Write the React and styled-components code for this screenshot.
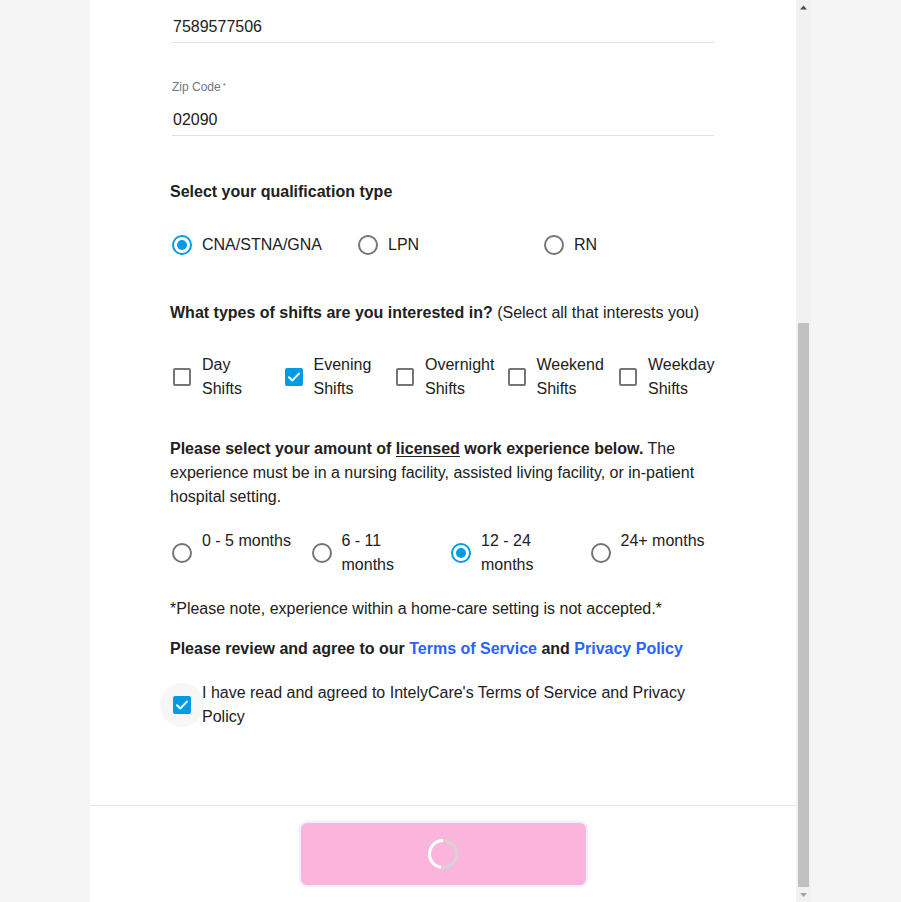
import React, { useLayoutEffect, useRef } from "react";
import styled, { createGlobalStyle } from "styled-components";

const Global = createGlobalStyle`
  html, body { margin: 0; padding: 0; background: #f5f5f5; }
  body { font-family: "Liberation Sans", Arial, sans-serif; color: #212121; }
  * { box-sizing: border-box; }
`;

const Panel = styled.div`
  width: 721px;
  height: 902px;
  margin: 0 auto;
  background: #fff;
  display: flex;
`;

const ScrollArea = styled.div`
  flex: 1;
  min-width: 0;
  height: 100%;
  overflow: hidden;
`;

const Scrollbar = styled.div`
  flex: none;
  width: 15px;
  height: 100%;
  background: #f1f1f1;
  display: flex;
  flex-direction: column;
`;

const ScrollButton = styled.div`
  flex: none;
  height: 15px;
  display: flex;
  align-items: center;
  justify-content: center;
`;

const ScrollTrack = styled.div`
  flex: 1;
  display: flex;
  flex-direction: column;
  justify-content: flex-end;
  padding: 0 2px;
`;

const ScrollThumb = styled.div`
  height: 564px;
  background: #c1c1c1;
`;

const Content = styled.div`
  padding: 0 80px;
`;

const Intro = styled.div`
  padding: 70px 0 24px;
`;

const Title = styled.h2`
  margin: 0;
  font-size: 24px;
  line-height: 32px;
  font-weight: 700;
`;

const Subtitle = styled.p`
  margin: 8px 0 0;
  font-size: 16px;
  line-height: 24px;
  color: #555;
`;

const Field = styled.div`
  margin: 36px 0 0 2px;
  width: 542px;
`;

const Label = styled.div`
  font-size: 12px;
  line-height: 13px;
  color: #757575;
  sup { font-size: 8px; vertical-align: 3px; margin-left: 2px; }
`;

const InputLine = styled.div`
  margin-top: 11px;
  height: 31px;
  display: flex;
  align-items: center;
  padding-left: 1px;
  font-size: 16px;
  color: #212121;
  border-bottom: 1px solid #e0e0e0;
`;

const Heading = styled.div`
  margin-top: ${(p) => p.$mt}px;
  font-size: 16px;
  line-height: 24px;
  font-weight: ${(p) => (p.$bold ? 700 : 400)};
  b { font-weight: 700; }
  u { text-decoration: underline; text-underline-offset: 2px; }
`;

const Link = styled.a`
  color: #2962ff;
  font-weight: 700;
  text-decoration: none;
`;

const OptionGrid = styled.div`
  margin-top: ${(p) => p.$mt}px;
  margin-left: 2px;
  display: grid;
  grid-template-columns: repeat(${(p) => p.$cols}, ${(p) => p.$w}px);
`;

const Option = styled.label`
  display: flex;
  align-items: ${(p) => (p.$top ? "flex-start" : "center")};
  gap: 10px;
  font-size: 16px;
  line-height: 24px;
  min-height: ${(p) => p.$h || 24}px;
`;

const ControlBox = styled.span`
  flex: none;
  width: 20px;
  height: ${(p) => p.$h || 20}px;
  display: flex;
  align-items: center;
  justify-content: center;
  position: relative;
`;

const RadioCircle = styled.span`
  width: 20px;
  height: 20px;
  border-radius: 50%;
  border: 2px solid ${(p) => (p.$on ? "#039be5" : "#757575")};
  display: flex;
  align-items: center;
  justify-content: center;
  &::after {
    content: "";
    width: 10px;
    height: 10px;
    border-radius: 50%;
    background: #039be5;
    display: ${(p) => (p.$on ? "block" : "none")};
  }
`;

const CheckSquare = styled.span`
  width: 18px;
  height: 18px;
  border-radius: 2px;
  border: 2px solid ${(p) => (p.$on ? "#039be5" : "#757575")};
  background: ${(p) => (p.$on ? "#039be5" : "#fff")};
  display: flex;
  align-items: center;
  justify-content: center;
  position: relative;
  z-index: 1;
`;

const Halo = styled.span`
  position: absolute;
  left: 50%;
  top: 50%;
  width: 44px;
  height: 44px;
  margin: -22px 0 0 -22px;
  border-radius: 50%;
  background: rgba(0, 0, 0, 0.03);
`;

const AgreeRow = styled.label`
  margin-top: 20px;
  margin-left: 2px;
  display: flex;
  align-items: center;
  gap: 10px;
  font-size: 16px;
  line-height: 24px;
`;

const Footer = styled.div`
  margin-top: 76px;
  border-top: 1px solid #e6e6e6;
  padding: 15px 0;
  display: flex;
  justify-content: center;
`;

const SubmitButton = styled.button`
  width: 289px;
  height: 66px;
  border: 2px solid #eef0ff;
  border-radius: 8px;
  background: #fbb4dc;
  display: flex;
  align-items: center;
  justify-content: center;
  padding: 0;
  cursor: default;
`;

const Check = () => (
  <svg width="14" height="14" viewBox="0 0 14 14">
    <path d="M2 7.2 L5.4 10.4 L12 3.6" fill="none" stroke="#fff" strokeWidth="2" strokeLinecap="round" strokeLinejoin="round" />
  </svg>
);

const Spinner = () => (
  <svg width="34" height="34" viewBox="0 0 34 34">
    <circle cx="17" cy="17" r="13.5" fill="none" stroke="#d4d4d4" strokeWidth="3" />
    <path d="M15 30.35 A13.5 13.5 0 0 1 17 3.5" fill="none" stroke="#ffffff" strokeWidth="3" />
  </svg>
);

const Arrow = ({ up, color }) => (
  <svg width="15" height="15" viewBox="0 0 15 15">
    <path d={up ? "M4 9.5 L7.5 5.5 L11 9.5 Z" : "M4 6 L7.5 10 L11 6 Z"} fill={color} />
  </svg>
);

const Radio = ({ on, h }) => (
  <ControlBox $h={h}>
    <RadioCircle $on={on} />
  </ControlBox>
);

const Checkbox = ({ on, halo }) => (
  <ControlBox>
    {halo && <Halo />}
    <CheckSquare $on={on}>{on && <Check />}</CheckSquare>
  </ControlBox>
);

const quals = [
  { t: "CNA/STNA/GNA", on: true },
  { t: "LPN" },
  { t: "RN" },
];

const shifts = [
  { t: "Day" },
  { t: "Evening", on: true },
  { t: "Overnight" },
  { t: "Weekend" },
  { t: "Weekday" },
];

const exps = [
  { t: "0 - 5 months" },
  { t: "6 - 11 months" },
  { t: "12 - 24 months", on: true },
  { t: "24+ months" },
];

const ShiftText = styled.span`
  display: block;
`;

const ExpText = styled.span`
  max-width: 92px;
`;

export default function App() {
  const ref = useRef(null);
  useLayoutEffect(() => {
    if (ref.current) ref.current.scrollTop = ref.current.scrollHeight;
  }, []);

  return (
    <>
      <Global />
      <Panel>
        <ScrollArea ref={ref}>
          <Content>
            <Intro>
              <Title>Create your account</Title>
              <Subtitle>Tell us a little about yourself.</Subtitle>
            </Intro>
            <Field>
              <Label>First Name<sup>*</sup></Label>
              <InputLine>Jane</InputLine>
            </Field>
            <Field>
              <Label>Last Name<sup>*</sup></Label>
              <InputLine>Doe</InputLine>
            </Field>
            <Field>
              <Label>Email<sup>*</sup></Label>
              <InputLine>jane.doe@example.com</InputLine>
            </Field>
            <Field>
              <Label>Phone Number<sup>*</sup></Label>
              <InputLine>7589577506</InputLine>
            </Field>
            <Field>
              <Label>Zip Code<sup>*</sup></Label>
              <InputLine>02090</InputLine>
            </Field>

            <Heading $mt={44} $bold>Select your qualification type</Heading>
            <OptionGrid $mt={17} $cols={3} $w={186}>
              {quals.map((q) => (
                <Option key={q.t} $h={48}>
                  <Radio on={q.on} />
                  <span>{q.t}</span>
                </Option>
              ))}
            </OptionGrid>

            <Heading $mt={32}>
              <b>What types of shifts are you interested in?</b> (Select all that interests you)
            </Heading>
            <OptionGrid $mt={28} $cols={5} $w={111.5}>
              {shifts.map((s) => (
                <Option key={s.t}>
                  <Checkbox on={s.on} />
                  <span>
                    <ShiftText>{s.t}</ShiftText>
                    <ShiftText>Shifts</ShiftText>
                  </span>
                </Option>
              ))}
            </OptionGrid>

            <Heading $mt={36}>
              <b>Please select your amount of <u>licensed</u> work experience below.</b> The
              experience must be in a nursing facility, assisted living facility, or in-patient
              hospital setting.
            </Heading>
            <OptionGrid $mt={20} $cols={4} $w={139.5}>
              {exps.map((e) => (
                <Option key={e.t} $top>
                  <Radio on={e.on} h={48} />
                  <ExpText>{e.t}</ExpText>
                </Option>
              ))}
            </OptionGrid>

            <Heading $mt={20}>*Please note, experience within a home-care setting is not accepted.*</Heading>

            <Heading $mt={16} $bold>
              Please review and agree to our <Link>Terms of Service</Link> and <Link>Privacy Policy</Link>
            </Heading>

            <AgreeRow>
              <Checkbox on halo />
              <span>I have read and agreed to IntelyCare's Terms of Service and Privacy Policy</span>
            </AgreeRow>
          </Content>
          <Footer>
            <SubmitButton aria-label="Submitting">
              <Spinner />
            </SubmitButton>
          </Footer>
        </ScrollArea>
        <Scrollbar aria-hidden="true">
          <ScrollButton>
            <Arrow up color="#505050" />
          </ScrollButton>
          <ScrollTrack>
            <ScrollThumb />
          </ScrollTrack>
          <ScrollButton>
            <Arrow color="#a3a3a3" />
          </ScrollButton>
        </Scrollbar>
      </Panel>
    </>
  );
}
